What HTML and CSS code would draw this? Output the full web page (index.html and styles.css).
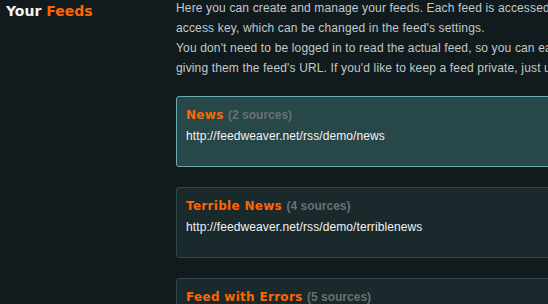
FILE: index.html
```html
<!DOCTYPE html>
<html>
<head>
<meta charset="utf-8">
<link rel="stylesheet" href="styles.css">
</head>
<body>
<div class="page">
  <aside class="sidebar">
    <h2 class="heading">Your <span class="accent">Feeds</span></h2>
  </aside>
  <main class="main">
    <div class="intro">
      <p class="para">Here you can create and manage your feeds. Each feed is accessed through a unique URL containing its<br>access key, which can be changed in the feed's settings.</p>
      <p class="para">You don't need to be logged in to read the actual feed, so you can easily share a feed with others by<br>giving them the feed's URL. If you'd like to keep a feed private, just use a new access key.</p>
    </div>
    <div class="feeds">
      <div class="card card-active">
        <div class="card-title">News <span class="count">(2 sources)</span></div>
        <div class="card-url">http://feedweaver.net/rss/demo/news</div>
      </div>
      <div class="card">
        <div class="card-title">Terrible News <span class="count">(4 sources)</span></div>
        <div class="card-url">http://feedweaver.net/rss/demo/terriblenews</div>
      </div>
      <div class="card">
        <div class="card-title">Feed with Errors <span class="count">(5 sources)</span></div>
        <div class="card-url">http://feedweaver.net/rss/demo/errors</div>
      </div>
    </div>
  </main>
</div>
</body>
</html>
```
FILE: styles.css
```css
html, body {
  margin: 0;
  padding: 0;
  background: #111b1e;
  overflow: hidden;
}
body {
  width: 548px;
  height: 304px;
  font-family: "Liberation Sans", Arial, sans-serif;
}
.page {
  display: flex;
  width: 820px;
}
.sidebar {
  width: 176px;
  flex-shrink: 0;
}
.heading {
  margin: 3px 0 0 6px;
  font-family: "DejaVu Sans", Verdana, sans-serif;
  font-weight: bold;
  font-size: 14px;
  line-height: 16px;
  color: #f4f4f4;
}
.accent {
  color: #ff6600;
}
.main {
  width: 640px;
  flex-shrink: 0;
}
.intro {
  margin-top: -2px;
  font-size: 12px;
  line-height: 20px;
  letter-spacing: 0.15px;
  color: #c3c9c9;
  white-space: nowrap;
}
.para {
  margin: 0;
}
.feeds {
  margin-top: 18px;
  display: flex;
  flex-direction: column;
  gap: 20px;
}
.card {
  border: 1px solid #2e4a4d;
  background: #19292c;
  border-radius: 3px;
  padding: 10px 9px 22px;
}
.card-active {
  border-color: #6aaab0;
  background: #274749;
}
.card-title {
  font-family: "DejaVu Sans", Verdana, sans-serif;
  font-weight: bold;
  font-size: 12px;
  line-height: 16px;
  color: #ff6600;
  letter-spacing: 0.3px;
}
.count {
  font-family: "Liberation Sans", Arial, sans-serif;
  letter-spacing: 0;
  color: #6a7172;
}
.card-url {
  margin-top: 5px;
  font-size: 12px;
  line-height: 16px;
  letter-spacing: 0.1px;
  color: #f2f4f4;
}
```
